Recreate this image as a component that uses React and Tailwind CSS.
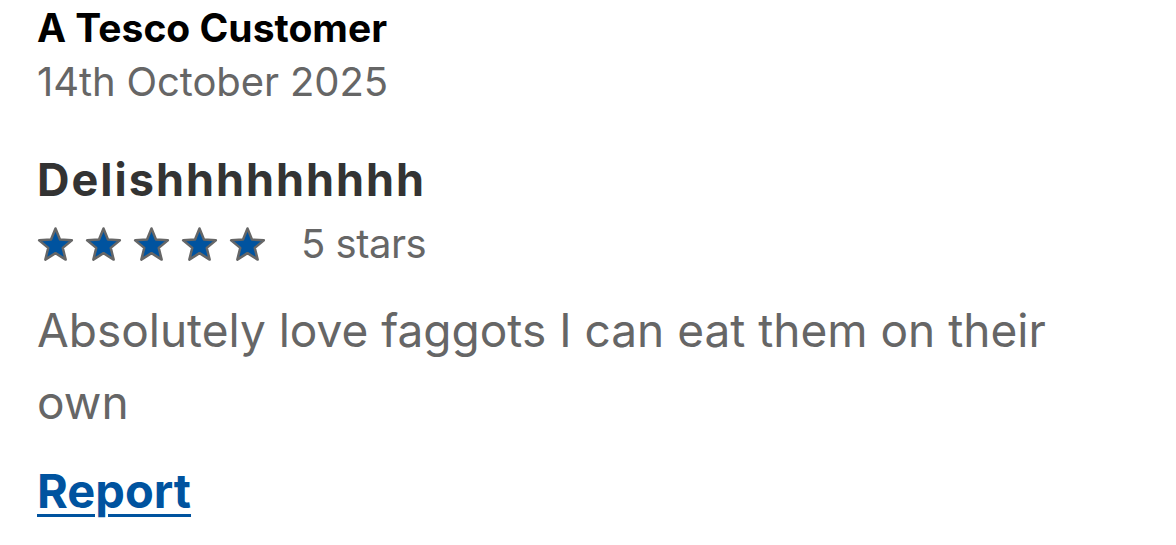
import React from "react";

function Star() {
  return (
    <svg viewBox="0 0 24 24" className="w-[37px] h-[37px]">
      <polygon
        points="12,1.6 14.9,8.8 22.6,9.3 16.7,14.2 18.6,21.8 12,17.6 5.4,21.8 7.3,14.2 1.4,9.3 9.1,8.8"
        fill="#00539f"
        stroke="#666666"
        strokeWidth="1.6"
        strokeLinejoin="round"
      />
    </svg>
  );
}

export default function App() {
  return (
    <div className="min-h-screen bg-white font-['Inter',sans-serif] px-[37px] pt-[4px]">
      <div className="text-[39px] font-bold leading-[48px] text-black">A Tesco Customer</div>
      <div className="mt-[4px] text-[40px] leading-[52px] text-[#666666] tracking-[-0.1px]">14th October 2025</div>

      <div className="mt-[46px] text-[45px] font-bold leading-[52px] text-[#333333] tracking-[2px]">Delishhhhhhhhh</div>

      <div className="mt-[12px] flex items-center">
        <div className="flex gap-[11px]">
          <Star />
          <Star />
          <Star />
          <Star />
          <Star />
        </div>
        <span className="ml-[35px] text-[40px] leading-[52px] text-[#666666] tracking-[-0.5px]">5 stars</span>
      </div>

      <p className="mt-[24px] text-[46px] leading-[72px] text-[#666666] max-w-[1060px]">
        Absolutely love faggots I can eat them on their own
      </p>

      <a href="#" className="mt-[27px] inline-block text-[47px] font-bold leading-[52px] text-[#00539f] underline underline-offset-[6px] decoration-[3px]">
        Report
      </a>
    </div>
  );
}
